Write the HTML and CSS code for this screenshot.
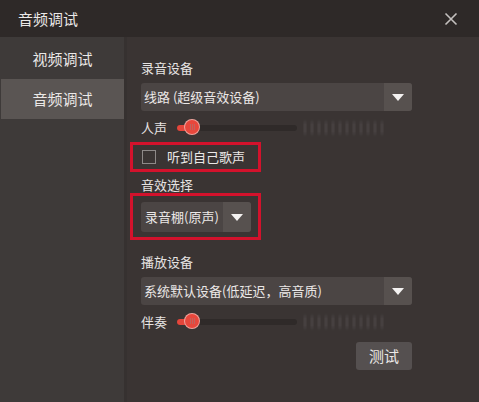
FILE: index.html
```html
<!DOCTYPE html>
<html lang="zh-CN">
<head>
<meta charset="utf-8">
<title>音频调试</title>
<link rel="stylesheet" href="styles.css">
</head>
<body>
<div class="window">
  <div class="titlebar">
    <span class="title">音频调试</span>
    <svg class="close" width="14" height="14" viewBox="0 0 14 14"><path d="M1.5 1.5 L12.5 12.5 M12.5 1.5 L1.5 12.5" stroke="#c4c0bf" stroke-width="1.6" fill="none"/></svg>
  </div>
  <div class="content">
    <div class="sidebar">
      <div class="nav-item">视频调试</div>
      <div class="nav-item active">音频调试</div>
    </div>
    <div class="main">
      <div class="label">录音设备</div>
      <div class="select wide">
        <span class="select-text">线路 (超级音效设备)</span>
        <span class="select-arrow"><span class="tri"></span></span>
      </div>
      <div class="slider-row">
        <span class="slider-label">人声</span>
        <div class="track"><div class="fill"></div><div class="thumb"><span class="grip"></span></div></div>
        <div class="meter"></div>
      </div>
      <div class="hl hl-check">
        <span class="checkbox"></span>
        <span class="check-label">听到自己歌声</span>
      </div>
      <div class="label label2">音效选择</div>
      <div class="hl hl-select">
        <div class="select narrow">
          <span class="select-text">录音棚(原声)</span>
          <span class="select-arrow"><span class="tri"></span></span>
        </div>
      </div>
      <div class="label label3">播放设备</div>
      <div class="select wide">
        <span class="select-text">系统默认设备(低延迟，高音质)</span>
        <span class="select-arrow"><span class="tri"></span></span>
      </div>
      <div class="slider-row">
        <span class="slider-label">伴奏</span>
        <div class="track"><div class="fill"></div><div class="thumb"><span class="grip"></span></div></div>
        <div class="meter"></div>
      </div>
      <div class="actions">
        <button class="btn">测试</button>
      </div>
    </div>
  </div>
</div>
</body>
</html>
```

FILE: styles.css
```css
html, body {
  margin: 0;
  padding: 0;
  background: #3a3433;
}
body {
  width: 479px;
  height: 402px;
  overflow: hidden;
  font-family: "Noto Sans CJK SC", "Noto Sans", sans-serif;
  color: #e6e3e2;
}
.window {
  width: 479px;
  height: 402px;
  display: flex;
  flex-direction: column;
}
.titlebar {
  height: 37px;
  flex: none;
  background: #2e2928;
  display: flex;
  align-items: center;
  justify-content: space-between;
  padding: 0 21px 0 18px;
}
.title {
  font-size: 15px;
  line-height: 20px;
  color: #ebe8e7;
}
.close {
  display: block;
}
.content {
  flex: 1;
  display: flex;
}
.sidebar {
  width: 124px;
  flex: none;
  background: #3e3a39;
  padding-top: 2px;
  border-right: 3px solid #363130;
}
.nav-item {
  height: 40px;
  line-height: 40px;
  text-align: center;
  font-size: 15px;
  color: #ebe8e7;
  margin-left: 1px;
}
.nav-item.active {
  background: #5a5553;
}
.main {
  flex: 1;
  padding: 22px 67px 0 14px;
  display: flex;
  flex-direction: column;
  align-items: flex-start;
}
.label {
  font-size: 13px;
  line-height: 18px;
  height: 18px;
}
.label2 { margin-top: 4px; }
.label3 { margin-top: 13px; }
.select {
  display: flex;
  height: 28px;
  background: #4b4544;
  border-radius: 3px;
  overflow: hidden;
  margin-top: 6px;
  flex: none;
}
.select.wide { width: 271px; }
.select.narrow { width: 110px; height: 30px; margin-top: 0; }
.select-text {
  flex: 1;
  font-size: 13px;
  line-height: 28px;
  padding-left: 3px;
  color: #ebe8e7;
  white-space: nowrap;
}
.select.narrow .select-text { line-height: 30px; padding-left: 4px; }
.select-arrow {
  width: 28px;
  background: #57514f;
  display: flex;
  align-items: center;
  justify-content: center;
}
.tri {
  width: 0;
  height: 0;
  border-left: 6px solid transparent;
  border-right: 6px solid transparent;
  border-top: 7px solid #f4f2f1;
  margin-top: 1px;
}
.slider-row {
  display: flex;
  align-items: center;
  height: 18px;
  margin-top: 8px;
}
.slider-label {
  width: 36px;
  font-size: 13px;
  line-height: 18px;
}
.track {
  position: relative;
  width: 120px;
  height: 6px;
  background: #2f2a29;
  border-radius: 3px;
}
.fill {
  width: 16px;
  height: 6px;
  background: #e4463b;
  border-radius: 3px 0 0 3px;
}
.thumb {
  position: absolute;
  left: 8px;
  top: -5px;
  width: 14px;
  height: 14px;
  border-radius: 50%;
  background: #e8473c;
  box-shadow: 0 0 0 1px #f0a49d;
  display: flex;
  align-items: center;
  justify-content: center;
}
.grip {
  width: 5px;
  height: 6px;
  background: repeating-linear-gradient(90deg, #c0645e 0 1px, transparent 1px 2px);
}
.meter {
  width: 82px;
  height: 18px;
  margin-left: 6px;
  background: repeating-linear-gradient(90deg, #413b3a 0 1px, #464040 1px 3px, #413b3a 3px 4px, transparent 4px 7px);
  -webkit-mask-image: linear-gradient(180deg, transparent 0, #000 30%, #000 70%, transparent 100%);
  mask-image: linear-gradient(180deg, transparent 0, #000 30%, #000 70%, transparent 100%);
}
.hl {
  border: 3px solid #d3122c;
  margin-left: -11px;
  display: flex;
  align-items: center;
  flex: none;
}
.hl-check {
  height: 24px;
  margin-top: 5px;
  padding-left: 9px;
  width: 116px;
}
.checkbox {
  width: 12px;
  height: 12px;
  border: 1px solid #8e8988;
  background: #3a3433;
  flex: none;
}
.check-label {
  margin-left: 11px;
  font-size: 13px;
  line-height: 18px;
  color: #ebe8e7;
}
.hl-select {
  margin-top: -1px;
  padding-left: 8px;
  align-items: flex-start;
  padding-top: 6px;
  box-sizing: border-box;
  height: 47px;
  width: 131px;
}
.actions {
  align-self: stretch;
  display: flex;
  justify-content: flex-end;
  margin-top: 11px;
}
.btn {
  width: 56px;
  height: 28px;
  border: none;
  border-radius: 3px;
  background: #555050;
  color: #ebe8e7;
  font-family: "Noto Sans CJK SC", "Noto Sans", sans-serif;
  font-size: 15px;
  line-height: 28px;
  padding: 0;
}
```
